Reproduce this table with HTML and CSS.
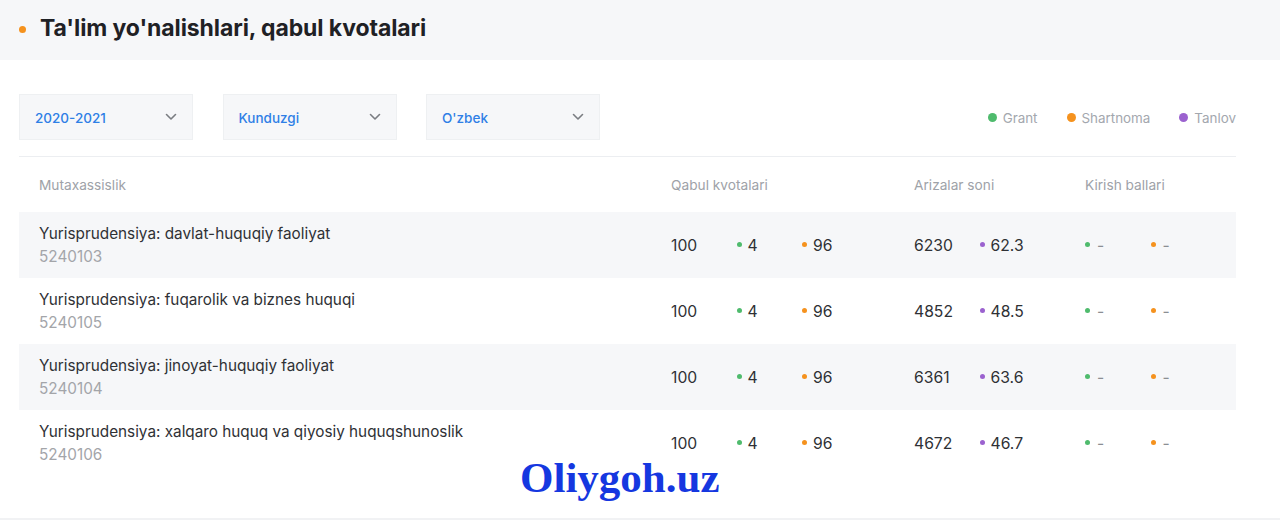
FILE: index.html
```html
<!DOCTYPE html>
<html lang="uz">
<head>
<meta charset="utf-8">
<title>Ta'lim yo'nalishlari</title>
<link rel="stylesheet" href="styles.css">
</head>
<body>
<header class="head">
  <span class="head-dot"></span>
  <h1 class="head-title">Ta'lim yo'nalishlari, qabul kvotalari</h1>
</header>
<section class="panel">
  <div class="toolbar">
    <div class="filters">
      <div class="select"><span>2020-2021</span><svg class="chev" width="12" height="8" viewBox="0 0 12 8"><path d="M1.5 1.5 6 6l4.5-4.5" fill="none" stroke="#7a7d82" stroke-width="1.6" stroke-linecap="round" stroke-linejoin="round"/></svg></div>
      <div class="select"><span>Kunduzgi</span><svg class="chev" width="12" height="8" viewBox="0 0 12 8"><path d="M1.5 1.5 6 6l4.5-4.5" fill="none" stroke="#7a7d82" stroke-width="1.6" stroke-linecap="round" stroke-linejoin="round"/></svg></div>
      <div class="select"><span>O'zbek</span><svg class="chev" width="12" height="8" viewBox="0 0 12 8"><path d="M1.5 1.5 6 6l4.5-4.5" fill="none" stroke="#7a7d82" stroke-width="1.6" stroke-linecap="round" stroke-linejoin="round"/></svg></div>
    </div>
    <div class="legend">
      <span class="leg"><i class="ldot green"></i>Grant</span>
      <span class="leg"><i class="ldot orange"></i>Shartnoma</span>
      <span class="leg"><i class="ldot purple"></i>Tanlov</span>
    </div>
  </div>
  <div class="table">
    <div class="row thead">
      <div class="c-name">Mutaxassislik</div>
      <div class="c-q">Qabul kvotalari</div>
      <div class="c-a">Arizalar soni</div>
      <div class="c-k">Kirish ballari</div>
    </div>
    <div class="row tr alt">
      <div class="c-name"><div class="nm">Yurisprudensiya: davlat-huquqiy faoliyat</div><div class="code">5240103</div></div>
      <div class="c-q sub"><span class="v">100</span><span class="v"><i class="d green"></i>4</span><span class="v"><i class="d orange"></i>96</span></div>
      <div class="c-a sub"><span class="v">6230</span><span class="v"><i class="d purple"></i>62.3</span></div>
      <div class="c-k sub"><span class="v"><i class="d green"></i>-</span><span class="v"><i class="d orange"></i>-</span></div>
    </div>
    <div class="row tr">
      <div class="c-name"><div class="nm">Yurisprudensiya: fuqarolik va biznes huquqi</div><div class="code">5240105</div></div>
      <div class="c-q sub"><span class="v">100</span><span class="v"><i class="d green"></i>4</span><span class="v"><i class="d orange"></i>96</span></div>
      <div class="c-a sub"><span class="v">4852</span><span class="v"><i class="d purple"></i>48.5</span></div>
      <div class="c-k sub"><span class="v"><i class="d green"></i>-</span><span class="v"><i class="d orange"></i>-</span></div>
    </div>
    <div class="row tr alt">
      <div class="c-name"><div class="nm">Yurisprudensiya: jinoyat-huquqiy faoliyat</div><div class="code">5240104</div></div>
      <div class="c-q sub"><span class="v">100</span><span class="v"><i class="d green"></i>4</span><span class="v"><i class="d orange"></i>96</span></div>
      <div class="c-a sub"><span class="v">6361</span><span class="v"><i class="d purple"></i>63.6</span></div>
      <div class="c-k sub"><span class="v"><i class="d green"></i>-</span><span class="v"><i class="d orange"></i>-</span></div>
    </div>
    <div class="row tr">
      <div class="c-name"><div class="nm">Yurisprudensiya: xalqaro huquq va qiyosiy huquqshunoslik</div><div class="code">5240106</div></div>
      <div class="c-q sub"><span class="v">100</span><span class="v"><i class="d green"></i>4</span><span class="v"><i class="d orange"></i>96</span></div>
      <div class="c-a sub"><span class="v">4672</span><span class="v"><i class="d purple"></i>46.7</span></div>
      <div class="c-k sub"><span class="v"><i class="d green"></i>-</span><span class="v"><i class="d orange"></i>-</span></div>
    </div>
  </div>
  <div class="watermark">Oliygoh.uz</div>
</section>
</body>
</html>
```

FILE: styles.css
```css
* { box-sizing: border-box; }
html, body { margin: 0; padding: 0; background: #fff; }
body { font-family: Inter, "Noto Sans", sans-serif; color: #2b2d31; }

.head {
  height: 60px;
  background: #f6f7f9;
  display: flex;
  align-items: center;
  padding-left: 19px;
  padding-bottom: 5px;
}
.head-dot {
  width: 7px; height: 7px; border-radius: 50%;
  background: #f5921e;
  margin-right: 14px;
  margin-top: 3px;
}
.head-title {
  margin: 0;
  font-size: 23px;
  font-weight: 700;
  color: #1f2125;
  letter-spacing: -0.1px;
}

.panel {
  position: relative;
  padding: 34px 44px 42px 19px;
  border-bottom: 2px solid #f1f2f4;
}
.toolbar {
  display: flex;
  justify-content: space-between;
  align-items: center;
  padding-bottom: 16px;
  border-bottom: 1px solid #eceef1;
}
.filters { display: flex; gap: 29.5px; }
.select {
  width: 174px; height: 46px;
  background: #f6f7f9;
  border: 1px solid #eef0f2;
  display: flex; align-items: center; justify-content: space-between;
  padding: 1px 15px 0 15px;
  font-size: 13.5px; font-weight: 500;
  color: #2f7fe6;
}
.chev { margin-top: -2px; }
.legend { display: flex; gap: 29px; font-size: 13.4px; color: #a3a7ae; padding-top: 1px; }
.leg { display: flex; align-items: center; }
.ldot { width: 9px; height: 9px; border-radius: 50%; margin-right: 6px; display: inline-block; }
.green { background: #4fbb6d; }
.orange { background: #f5921e; }
.purple { background: #9b62cf; }

.table { width: 1217px; }
.row {
  display: grid;
  grid-template-columns: 632px 243px 171px 1fr;
  padding-left: 20px;
  align-items: center;
}
.thead { height: 55px; font-size: 13.7px; color: #9ea2a8; }
.tr { height: 66px; font-size: 15.7px; color: #2f3135; }
.tr.alt { background: #f6f7f9; }
.nm { font-size: 15.3px; line-height: 23px; margin-top: -1px; color: #2f3135; }
.code { font-size: 15.3px; line-height: 23px; color: #a3a5a9; }
.sub { display: flex; }
.v { display: inline-flex; align-items: center; width: 65.5px; }
.d { width: 5px; height: 5px; border-radius: 50%; display: inline-block; margin-right: 6px; margin-top: -1px; }
.c-k .d { margin-right: 7px; }
.c-k .v { color: #8b8e93; }

.watermark {
  position: absolute;
  left: 520px;
  top: 396px;
  font-family: "Liberation Serif", "Times New Roman", serif;
  font-weight: 700;
  font-size: 43px;
  line-height: 1;
  color: #1537e0;
}
```
